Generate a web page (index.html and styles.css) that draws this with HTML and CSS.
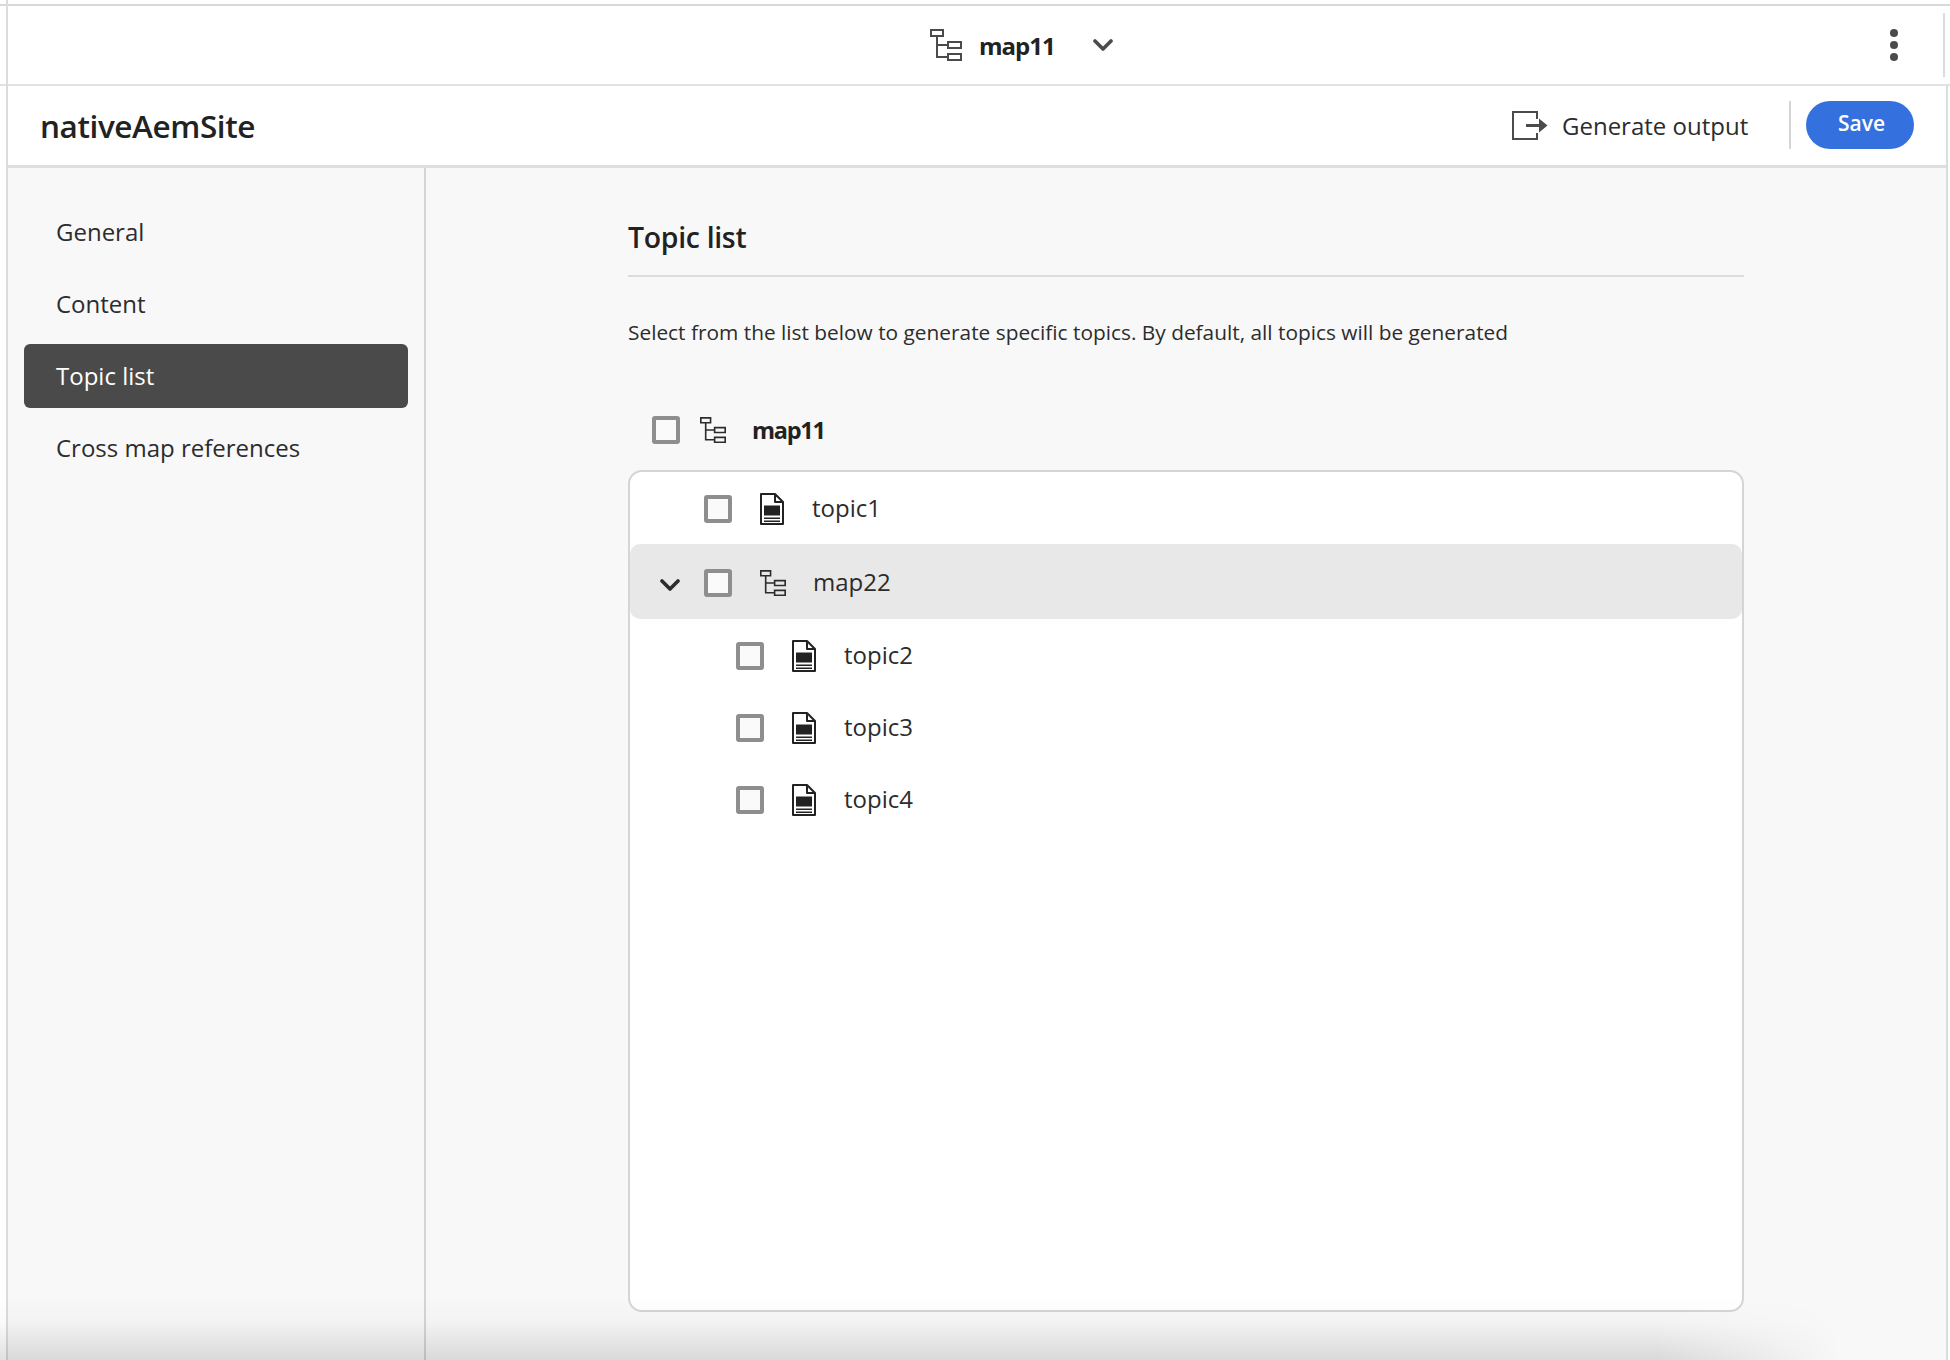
FILE: index.html
```html
<!DOCTYPE html>
<html lang="en">
<head>
<meta charset="utf-8">
<title>nativeAemSite</title>
<link rel="stylesheet" href="styles.css">
</head>
<body>
<svg class="defs" width="0" height="0" aria-hidden="true">
  <symbol id="tree" viewBox="0 0 32 32">
    <path fill="none" stroke="currentColor" stroke-width="2" d="M1 1h12v6H1zM18 13h13v6H18zM18 25h13v6H18zM7 7v21h11M7 16h11"/>
  </symbol>
  <symbol id="doc" viewBox="0 0 24 32">
    <path fill="none" stroke="currentColor" stroke-width="2" stroke-linejoin="round" d="M1 1h14l8 8v22H1zM15 1v8h8"/>
    <path fill="currentColor" d="M4 12.500h16v10H4zM4 24.500h16v1.500H4zM4 27.500h16v1.500H4z"/>
  </symbol>
</svg>
<div class="frame">
  <header class="topbar">
    <svg class="top-tree"><use href="#tree"/></svg>
    <span class="top-name">map11</span>
    <svg class="top-chevron" viewBox="0 0 20 12"><path d="M2 2l8 8 8-8" fill="none" stroke="currentColor" stroke-width="3.600" stroke-linecap="round" stroke-linejoin="round"/></svg>
    <span class="kebab"><i></i><i></i><i></i></span>
    <span class="top-edge"></span>
  </header>
  <div class="shell">
    <div class="subheader">
      <h1 class="site-name">nativeAemSite</h1>
      <div class="actions">
        <svg class="export-icon" viewBox="0 0 36 29"><path d="M25 8V1H1v27h24v-6" fill="none" stroke="currentColor" stroke-width="2"/><path d="M14 13h13V7.500l8.500 7-8.500 7V16H14z" fill="currentColor"/></svg>
        <span class="generate">Generate output</span>
        <span class="divider"></span>
        <button class="save" type="button">Save</button>
      </div>
    </div>
    <div class="body">
      <nav class="sidebar">
        <a class="nav-item">General</a>
        <a class="nav-item">Content</a>
        <a class="nav-item active">Topic list</a>
        <a class="nav-item">Cross map references</a>
      </nav>
      <main class="main">
        <h2 class="section-title">Topic list</h2>
        <p class="desc">Select from the list below to generate specific topics. By default, all topics will be generated</p>
        <div class="root-row">
          <span class="check"></span>
          <svg class="tree-icon"><use href="#tree"/></svg>
          <strong class="root-name">map11</strong>
        </div>
        <div class="tree-box">
          <div class="row row-first">
            <span class="check"></span>
            <svg class="doc-icon"><use href="#doc"/></svg>
            <span class="label">topic1</span>
          </div>
          <div class="row row-map">
            <svg class="row-chevron" viewBox="0 0 20 12"><path d="M2 2l8 8 8-8" fill="none" stroke="currentColor" stroke-width="3.600" stroke-linecap="round" stroke-linejoin="round"/></svg>
            <span class="check"></span>
            <svg class="tree-icon tree-icon-row"><use href="#tree"/></svg>
            <span class="label">map22</span>
          </div>
          <div class="children">
            <div class="row row-child">
              <span class="check"></span>
              <svg class="doc-icon"><use href="#doc"/></svg>
              <span class="label">topic2</span>
            </div>
            <div class="row row-child">
              <span class="check"></span>
              <svg class="doc-icon"><use href="#doc"/></svg>
              <span class="label">topic3</span>
            </div>
            <div class="row row-child">
              <span class="check"></span>
              <svg class="doc-icon"><use href="#doc"/></svg>
              <span class="label">topic4</span>
            </div>
          </div>
        </div>
      </main>
    </div>
  </div>
  <div class="bottom-shade"></div>
</div>
</body>
</html>
```
FILE: styles.css
```css
* { box-sizing: border-box; }
html, body { margin: 0; height: 100%; background: #fff; }
body { font-family: "Open Sans", "Noto Sans", sans-serif; color: #2c2c2c; overflow: hidden; }
.defs { position: absolute; }
.frame { position: relative; height: 1360px; padding-top: 4px; overflow: hidden; }
.frame::before { content: ""; position: absolute; left: 6px; top: 0; bottom: 0; width: 2px; background: #dcdcdc; z-index: 2; }

.topbar { position: relative; height: 82px; display: flex; align-items: center; padding-left: 930px; border-top: 2px solid #d9d9d9; border-bottom: 2px solid #e2e2e2; }
.top-tree { width: 32px; height: 32px; color: #4b4b4b; margin-top: -1px; }
.top-name { margin-left: 17px; font-size: 24px; font-weight: 700; color: #222; letter-spacing: -1px; }
.top-chevron { width: 20px; height: 12px; margin-left: 38px; color: #4b4b4b; }
.kebab { display: flex; flex-direction: column; gap: 4px; margin-left: 777px; }
.kebab i { display: block; width: 8px; height: 8px; border-radius: 50%; background: #4b4b4b; }
.top-edge { position: absolute; left: 1943px; top: 7px; width: 2px; height: 64px; background: #d9d9d9; }

.shell { margin-left: 6px; width: 1942px; height: 1274px; border-left: 2px solid #dcdcdc; border-right: 2px solid #dcdcdc; display: flex; flex-direction: column; }
.subheader { height: 82px; flex: none; display: flex; align-items: center; justify-content: space-between; padding: 0 32px 1px 32px; border-bottom: 3px solid #dedede; background: #fff; }
.site-name { margin: 0; font-size: 31.500px; font-weight: 600; color: #222; letter-spacing: -0.4px; }
.actions { display: flex; align-items: center; }
.export-icon { width: 36px; height: 29px; color: #4b4b4b; }
.generate { margin-left: 14px; font-size: 24px; width: 186px; white-space: nowrap; }
.divider { width: 2px; height: 48px; margin: 0 15px 0 41px; background: #d5d5d5; }
.save { width: 108px; height: 48px; border: 0; border-radius: 24px; background: #3571de; color: #fff; font: 600 21px "Open Sans", sans-serif; padding: 0 0 5px 3px; }

.body { flex: 1; min-height: 0; display: flex; background: #f8f8f8; }
.sidebar { width: 418px; flex: none; padding: 32px 16px 0; border-right: 2px solid #d5d5d5; display: flex; flex-direction: column; gap: 8px; }
.nav-item { height: 64px; display: flex; align-items: center; padding: 0 0 1px 32px; font-size: 24px; border-radius: 6px; }
.nav-item.active { background: #4a4a4a; color: #fff; }

.main { width: 1116px; margin-left: 202px; display: flex; flex-direction: column; }
.section-title { margin: 0; height: 109px; padding-top: 45px; line-height: 48px; font-size: 28.400px; font-weight: 600; color: #222; border-bottom: 2px solid #dcdcdc; letter-spacing: -0.3px; }
.desc { margin: 0; height: 113px; padding-top: 37px; line-height: 36px; font-size: 20.850px; white-space: nowrap; }
.root-row { height: 80px; padding-left: 24px; display: flex; align-items: center; }
.check { width: 28px; height: 28px; flex: none; border: 4px solid #8e8e8e; border-radius: 3px; background: #fafafa; }
.tree-icon { width: 26px; height: 26px; color: #2c2c2c; margin-left: 20px; flex: none; }
.root-name { margin-left: 26px; font-size: 23.500px; font-weight: 700; color: #222; letter-spacing: -1.300px; }

.tree-box { width: 1116px; height: 842px; border: 2px solid #d5d5d5; border-radius: 14px; background: #fff; padding-top: 2px; }
.row { display: flex; align-items: center; font-size: 24px; }
.row-first { height: 70px; padding-left: 74px; }
.row-map { height: 75px; background: #e8e8e8; padding: 2px 0 0 30px; border-radius: 10px; }
.children { padding-top: 1px; }
.row-child { height: 72px; padding-left: 106px; }
.label { margin-left: 28px; padding-bottom: 3px; }
.row-map .label { margin-left: 27px; }
.doc-icon { width: 24px; height: 32px; margin-left: 28px; flex: none; color: #222; }
.row-chevron { width: 20px; height: 12px; color: #2c2c2c; margin-right: 24px; margin-top: 4px; flex: none; }
.tree-icon-row { margin-left: 28px; }

.bottom-shade { position: absolute; left: 0; bottom: 0; width: 1840px; height: 64px; pointer-events: none; z-index: 3;
  background: linear-gradient(to bottom, rgba(0,0,0,0) 0%, rgba(0,0,0,0.02) 40%, rgba(0,0,0,0.12) 100%);
  -webkit-mask-image: linear-gradient(to right, #000 90%, transparent 100%);
  mask-image: linear-gradient(to right, #000 90%, transparent 100%); }
```
